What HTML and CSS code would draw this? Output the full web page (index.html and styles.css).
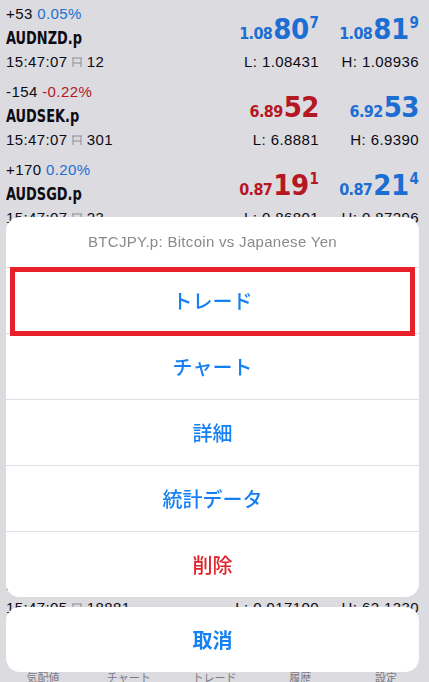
FILE: index.html
```html
<!DOCTYPE html>
<html lang="ja">
<head>
  <meta charset="UTF-8" />
  <meta name="viewport" content="width=device-width, initial-scale=1" />
  <title>気配値</title>
  <link rel="stylesheet" href="styles.css">
</head>
<body>
  <div class="screen">
    <div class="quotes">
      <div class="quote">
        <div class="info">
          <div class="change">+53 <span class="up">0.05%</span></div>
          <div class="symbol"><span>AUDNZD.p</span></div>
          <div class="time">15:47:07 <svg class="spread" viewBox="0 0 10 11"><path d="M1 1v9M9 1v9M0 1h10M1 6h8"/></svg> 12</div>
        </div>
        <div class="price">
          <div class="rate up"><span class="small">1.08</span><span class="big">80</span><span class="sup">7</span></div>
          <div class="range">L: 1.08431</div>
        </div>
        <div class="price">
          <div class="rate up"><span class="small">1.08</span><span class="big">81</span><span class="sup">9</span></div>
          <div class="range">H: 1.08936</div>
        </div>
      </div>

      <div class="quote">
        <div class="info">
          <div class="change">-154 <span class="down">-0.22%</span></div>
          <div class="symbol"><span>AUDSEK.p</span></div>
          <div class="time">15:47:07 <svg class="spread" viewBox="0 0 10 11"><path d="M1 1v9M9 1v9M0 1h10M1 6h8"/></svg> 301</div>
        </div>
        <div class="price">
          <div class="rate down"><span class="small">6.89</span><span class="big">52</span></div>
          <div class="range">L: 6.8881</div>
        </div>
        <div class="price">
          <div class="rate up"><span class="small">6.92</span><span class="big">53</span></div>
          <div class="range">H: 6.9390</div>
        </div>
      </div>

      <div class="quote">
        <div class="info">
          <div class="change">+170 <span class="up">0.20%</span></div>
          <div class="symbol"><span>AUDSGD.p</span></div>
          <div class="time">15:47:07 <svg class="spread" viewBox="0 0 10 11"><path d="M1 1v9M9 1v9M0 1h10M1 6h8"/></svg> 23</div>
        </div>
        <div class="price">
          <div class="rate down"><span class="small">0.87</span><span class="big">19</span><span class="sup">1</span></div>
          <div class="range">L: 0.86801</div>
        </div>
        <div class="price">
          <div class="rate up"><span class="small">0.87</span><span class="big">21</span><span class="sup">4</span></div>
          <div class="range">H: 0.87296</div>
        </div>
      </div>

      <div class="quote">
        <div class="info">
          <div class="change">+21 <span class="up">0.02%</span></div>
          <div class="symbol"><span>AUDUSD.p</span></div>
          <div class="time">15:47:07 <svg class="spread" viewBox="0 0 10 11"><path d="M1 1v9M9 1v9M0 1h10M1 6h8"/></svg> 9</div>
        </div>
        <div class="price">
          <div class="rate up"><span class="small">0.65</span><span class="big">12</span><span class="sup">4</span></div>
          <div class="range">L: 0.64932</div>
        </div>
        <div class="price">
          <div class="rate up"><span class="small">0.65</span><span class="big">13</span><span class="sup">3</span></div>
          <div class="range">H: 0.65218</div>
        </div>
      </div>

      <div class="quote">
        <div class="info">
          <div class="change">-310 <span class="down">-0.34%</span></div>
          <div class="symbol"><span>BTCJPY.p</span></div>
          <div class="time">15:47:06 <svg class="spread" viewBox="0 0 10 11"><path d="M1 1v9M9 1v9M0 1h10M1 6h8"/></svg> 25000</div>
        </div>
        <div class="price">
          <div class="rate down"><span class="small">91</span><span class="big">72</span><span class="sup">0</span></div>
          <div class="range">L: 9147100</div>
        </div>
        <div class="price">
          <div class="rate down"><span class="small">91</span><span class="big">74</span><span class="sup">5</span></div>
          <div class="range">H: 9260500</div>
        </div>
      </div>

      <div class="quote">
        <div class="info">
          <div class="change">+12 <span class="up">0.01%</span></div>
          <div class="symbol"><span>CADCHF.p</span></div>
          <div class="time">15:47:06 <svg class="spread" viewBox="0 0 10 11"><path d="M1 1v9M9 1v9M0 1h10M1 6h8"/></svg> 18</div>
        </div>
        <div class="price">
          <div class="rate up"><span class="small">0.64</span><span class="big">83</span><span class="sup">2</span></div>
          <div class="range">L: 0.64712</div>
        </div>
        <div class="price">
          <div class="rate up"><span class="small">0.64</span><span class="big">85</span><span class="sup">0</span></div>
          <div class="range">H: 0.64993</div>
        </div>
      </div>

      <div class="quote">
        <div class="info">
          <div class="change">-45 <span class="down">-0.04%</span></div>
          <div class="symbol"><span>CADJPY.p</span></div>
          <div class="time">15:47:06 <svg class="spread" viewBox="0 0 10 11"><path d="M1 1v9M9 1v9M0 1h10M1 6h8"/></svg> 20</div>
        </div>
        <div class="price">
          <div class="rate down"><span class="small">108.</span><span class="big">41</span><span class="sup">2</span></div>
          <div class="range">L: 108.215</div>
        </div>
        <div class="price">
          <div class="rate down"><span class="small">108.</span><span class="big">43</span><span class="sup">2</span></div>
          <div class="range">H: 108.690</div>
        </div>
      </div>

      <div class="quote">
        <div class="info">
          <div class="change">+880 <span class="up">0.09%</span></div>
          <div class="symbol"><span>BTCUSD.p</span></div>
          <div class="time">15:47:05 <svg class="spread" viewBox="0 0 10 11"><path d="M1 1v9M9 1v9M0 1h10M1 6h8"/></svg> 18881</div>
        </div>
        <div class="price">
          <div class="rate up"><span class="small">61</span><span class="big">72</span><span class="sup">6</span></div>
          <div class="range">L: 0.917100</div>
        </div>
        <div class="price">
          <div class="rate up"><span class="small">61</span><span class="big">91</span><span class="sup">4</span></div>
          <div class="range">H: 62.1330</div>
        </div>
      </div>
    </div>

    <nav class="tabbar">
      <div class="tab">気配値</div>
      <div class="tab">チャート</div>
      <div class="tab">トレード</div>
      <div class="tab">履歴</div>
      <div class="tab">設定</div>
    </nav>
  </div>

  <div class="overlay">
    <div class="sheet">
      <div class="sheet-group">
        <div class="sheet-title">BTCJPY.p: Bitcoin vs Japanese Yen</div>
        <button class="sheet-item marked">トレード</button>
        <button class="sheet-item">チャート</button>
        <button class="sheet-item">詳細</button>
        <button class="sheet-item">統計データ</button>
        <button class="sheet-item danger">削除</button>
      </div>
      <button class="sheet-cancel">取消</button>
    </div>
  </div>
</body>
</html>
```

FILE: styles.css
```css
* {
  box-sizing: border-box;
}
body {
  margin: 0;
  height: 682px;
  overflow: hidden;
  background: #fff;
  color: #0c0c0e;
  font-family: "Liberation Sans", "Noto Sans CJK JP", sans-serif;
}
.screen {
  height: 685px;
  display: flex;
  flex-direction: column;
}
.quotes {
  flex: 1;
  overflow: hidden;
}
.quote {
  display: grid;
  grid-template-columns: 1fr 100px 100px;
  height: 78px;
  padding: 2px 10px 4px 6px;
}
.info div {
  height: 24px;
  line-height: 24px;
  font-size: 15px;
  letter-spacing: 0.4px;
  white-space: nowrap;
}
.info .symbol {
  font-family: "DejaVu Sans Condensed", "DejaVu Sans", sans-serif;
  font-weight: 700;
  font-size: 18px;
  letter-spacing: 0;
}
.symbol span {
  display: inline-block;
  transform: scaleX(0.8);
  transform-origin: left center;
}
.spread {
  width: 10px;
  height: 11px;
  fill: none;
  stroke: #a4a4a8;
  stroke-width: 1;
  vertical-align: -1px;
}
.up {
  color: #1e7ff0;
}
.down {
  color: #d01a22;
}
.price {
  display: flex;
  flex-direction: column;
  justify-content: flex-end;
  align-items: flex-end;
}
.rate {
  font-family: "DejaVu Sans Condensed", "DejaVu Sans", sans-serif;
  font-weight: 700;
  line-height: 32px;
  white-space: nowrap;
}
.rate span {
  line-height: 1;
}
.rate .small {
  font-size: 16px;
  letter-spacing: -0.6px;
}
.rate .big {
  font-size: 29px;
  letter-spacing: -0.5px;
  margin-left: 1px;
}
.rate .sup {
  font-size: 15px;
  vertical-align: 11px;
  margin-left: 1px;
}
.range {
  font-size: 15px;
  line-height: 24px;
  letter-spacing: 0.4px;
  white-space: nowrap;
}
.tabbar {
  height: 55px;
  display: grid;
  grid-template-columns: repeat(5, 1fr);
  align-items: end;
}
.tab {
  text-align: center;
  font-size: 11px;
  line-height: 14px;
  color: #8e8e93;
}
.overlay {
  position: fixed;
  top: 0;
  left: 0;
  right: 0;
  bottom: 0;
  background: rgba(22, 15, 48, 0.15);
  display: flex;
  flex-direction: column;
  justify-content: flex-end;
  padding: 0 10px 10px 6px;
}
.sheet-group {
  background: #fff;
  border-radius: 14px;
}
.sheet-title {
  height: 50px;
  line-height: 50px;
  text-align: center;
  font-size: 15px;
  letter-spacing: 0.3px;
  color: #8a8a8e;
}
.sheet-item, .sheet-cancel {
  display: block;
  width: 100%;
  margin: 0;
  padding: 0;
  border: none;
  background: #fff;
  font-family: "Noto Sans CJK JP", sans-serif;
  font-size: 20px;
  font-weight: 500;
  color: #1580f3;
  cursor: pointer;
}
.sheet-item {
  position: relative;
  height: 66px;
  border-top: 1px solid #dedee3;
}
.sheet-item:last-child {
  border-radius: 0 0 14px 14px;
}
.sheet-item.danger {
  color: #e0202a;
}
.sheet-item.marked::after {
  content: "";
  position: absolute;
  top: -1px;
  left: 4px;
  right: 4px;
  bottom: -3px;
  border: 5px solid #e8202a;
  z-index: 1;
}
.sheet-cancel {
  height: 65px;
  margin-top: 10px;
  border-radius: 14px;
  font-weight: 700;
}
```
